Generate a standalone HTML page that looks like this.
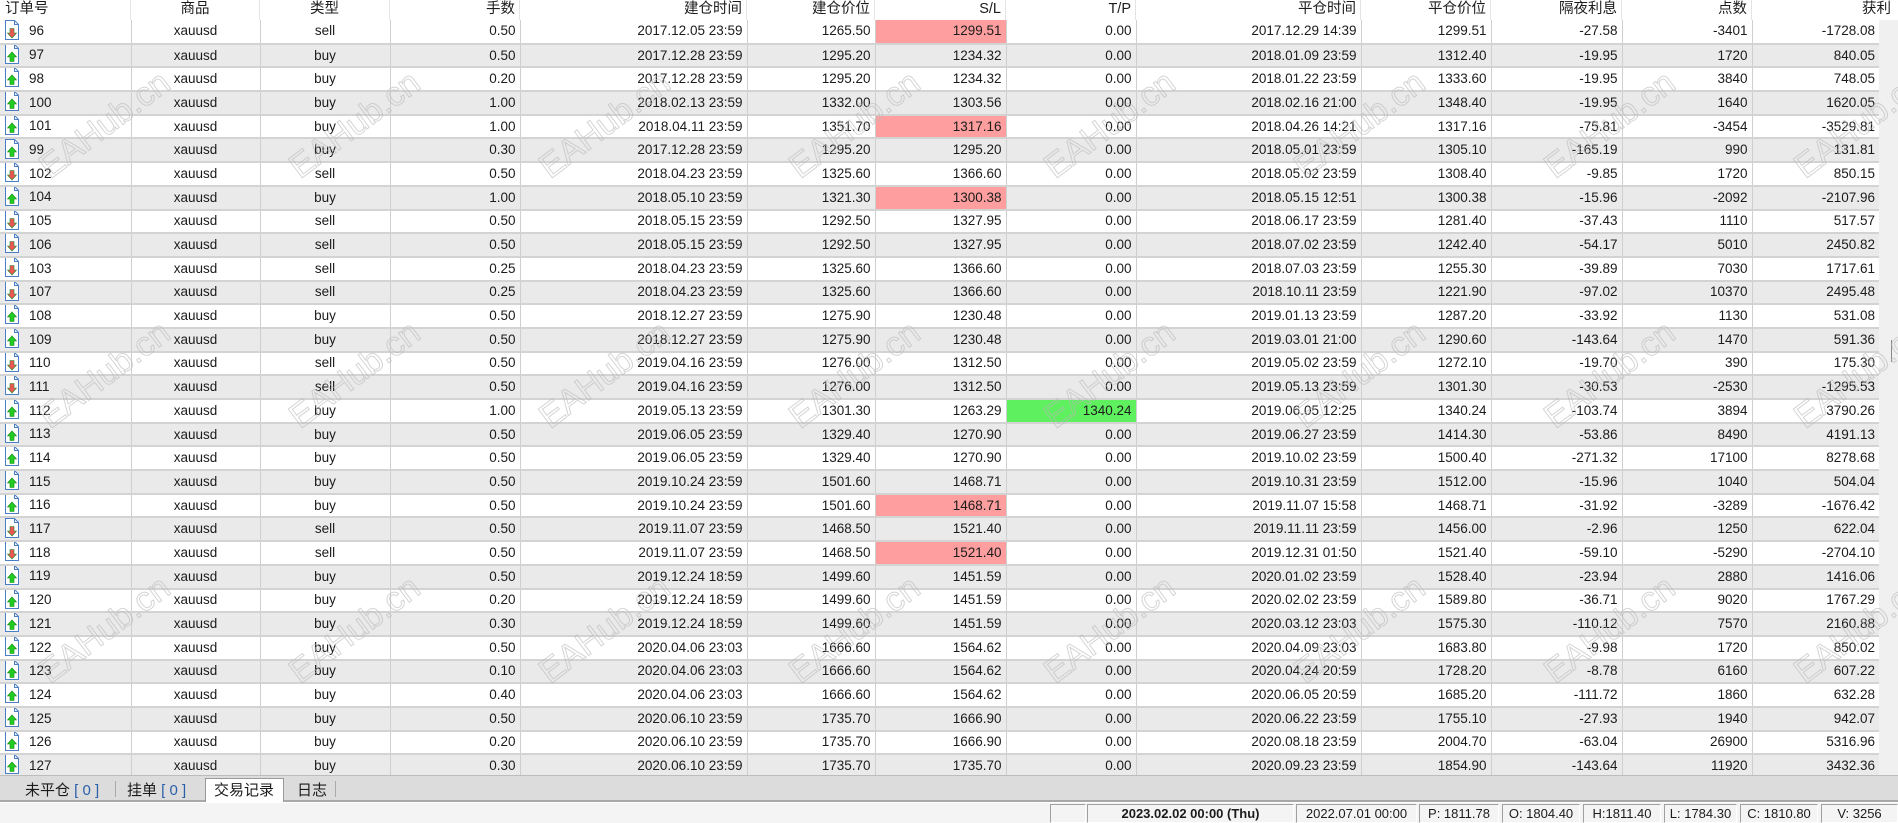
<!DOCTYPE html>
<html><head><meta charset="utf-8">
<style>
*{margin:0;padding:0;box-sizing:border-box}
html,body{width:1898px;height:823px;overflow:hidden;background:#fff;font-family:"Liberation Sans","Noto Sans CJK SC",sans-serif;color:#1b1b1b}
#hdr{position:absolute;left:0;top:0;width:1898px;height:20px;background:#fff;font-size:14.5px}
#hdr div{position:absolute;top:0;height:20px;line-height:19px;border-right:1px solid #e4e4e4}
table{position:absolute;left:0;top:20px;border-collapse:collapse;table-layout:fixed;width:1879px;font-size:13.5px}
td{height:23.7px;padding:0 4px;text-align:right;border-left:1px solid #cfcfcf;border-bottom:2px solid #d3d3d3;white-space:nowrap;overflow:hidden;line-height:20px}
td:first-child{border-left:none;text-align:left;padding-left:4px}
td.c{text-align:center}
tr:nth-child(even) td{background:#eaeaea}
td.r{background:#ff9e9e!important}
td.g{background:#5ff05f!important}
td svg{vertical-align:middle;margin-right:9px;position:relative;top:-2px}
#sb{position:absolute;left:1879px;top:20px;width:19px;height:755px;background:#f0f0f0}
#sb i{position:absolute;left:12px;top:320px;width:1px;height:22px;background:#888}
.wm{position:absolute;font-size:34px;font-family:"Liberation Sans",sans-serif;color:transparent;-webkit-text-stroke:1px rgba(185,185,185,.6);transform:translate(-50%,-50%) rotate(-37deg);white-space:nowrap;pointer-events:none}
#tabs{position:absolute;left:0;top:775px;width:1898px;height:27px;background:#dcdcdc;border-top:1px solid #bcbcbc;border-bottom:2px solid #a8a8a8;font-size:15px}
#tabs span{position:absolute;top:3px}
#tabs b.s{position:absolute;top:5px;width:1px;height:16px;background:#aaa}
#tabs .act{position:absolute;left:205px;top:2px;width:79px;height:24px;background:#fff;border:1px solid #999;border-bottom:none}
.bl{color:#2b5fa8}
#st{position:absolute;left:0;top:803px;width:1898px;height:20px;background:#f4f4f4;font-size:13px}
#st div{position:absolute;top:1px;height:19px;line-height:18px;border:1px solid;border-color:#a0a0a0 #fff #fff #a0a0a0;text-align:center}
</style></head><body>
<div id="hdr">
<div style="left:0;width:131px;padding-left:5px">订单号</div>
<div style="left:131px;width:129px;text-align:center">商品</div>
<div style="left:260px;width:130px;text-align:center">类型</div>
<div style="left:390px;width:130px;text-align:right;padding-right:4px">手数</div>
<div style="left:520px;width:227px;text-align:right;padding-right:4px">建仓时间</div>
<div style="left:747px;width:128px;text-align:right;padding-right:4px">建仓价位</div>
<div style="left:875px;width:131px;text-align:right;padding-right:4px">S/L</div>
<div style="left:1006px;width:130px;text-align:right;padding-right:4px">T/P</div>
<div style="left:1136px;width:225px;text-align:right;padding-right:4px">平仓时间</div>
<div style="left:1361px;width:130px;text-align:right;padding-right:4px">平仓价位</div>
<div style="left:1491px;width:131px;text-align:right;padding-right:4px">隔夜利息</div>
<div style="left:1622px;width:130px;text-align:right;padding-right:4px">点数</div>
<div style="left:1752px;width:146px;text-align:right;padding-right:7px;border:none">获利</div>
</div>
<svg width="0" height="0" style="position:absolute"><defs>
<g id="pg"><path d="M1.5 0.5H10.5L14.5 4.5V19.5H1.5Z" fill="#fff" stroke="#4a7fc8"/><path d="M10.5 0.5V4.5H14.5" fill="none" stroke="#4a7fc8"/></g>
<g id="up"><use href="#pg"/><path d="M8 8L12.5 13H10V17.5H6V13H3.5Z" fill="#22cc22" stroke="#118811" stroke-width=".6"/></g>
<g id="dn"><use href="#pg"/><path d="M8 18L12.5 13H10V8.5H6V13H3.5Z" fill="#ee5555" stroke="#228822" stroke-width=".6"/></g>
</defs></svg>
<table>
<colgroup><col style="width:131px"><col style="width:129px"><col style="width:130px"><col style="width:130px"><col style="width:227px"><col style="width:128px"><col style="width:131px"><col style="width:130px"><col style="width:225px"><col style="width:130px"><col style="width:131px"><col style="width:130px"><col style="width:127px"></colgroup>
<tr><td><svg width="16" height="20"><use href="#dn"/></svg>96</td><td class="c">xauusd</td><td class="c">sell</td><td>0.50</td><td>2017.12.05 23:59</td><td>1265.50</td><td class="r">1299.51</td><td>0.00</td><td>2017.12.29 14:39</td><td>1299.51</td><td>-27.58</td><td>-3401</td><td>-1728.08</td></tr>
<tr><td><svg width="16" height="20"><use href="#up"/></svg>97</td><td class="c">xauusd</td><td class="c">buy</td><td>0.50</td><td>2017.12.28 23:59</td><td>1295.20</td><td>1234.32</td><td>0.00</td><td>2018.01.09 23:59</td><td>1312.40</td><td>-19.95</td><td>1720</td><td>840.05</td></tr>
<tr><td><svg width="16" height="20"><use href="#up"/></svg>98</td><td class="c">xauusd</td><td class="c">buy</td><td>0.20</td><td>2017.12.28 23:59</td><td>1295.20</td><td>1234.32</td><td>0.00</td><td>2018.01.22 23:59</td><td>1333.60</td><td>-19.95</td><td>3840</td><td>748.05</td></tr>
<tr><td><svg width="16" height="20"><use href="#up"/></svg>100</td><td class="c">xauusd</td><td class="c">buy</td><td>1.00</td><td>2018.02.13 23:59</td><td>1332.00</td><td>1303.56</td><td>0.00</td><td>2018.02.16 21:00</td><td>1348.40</td><td>-19.95</td><td>1640</td><td>1620.05</td></tr>
<tr><td><svg width="16" height="20"><use href="#up"/></svg>101</td><td class="c">xauusd</td><td class="c">buy</td><td>1.00</td><td>2018.04.11 23:59</td><td>1351.70</td><td class="r">1317.16</td><td>0.00</td><td>2018.04.26 14:21</td><td>1317.16</td><td>-75.81</td><td>-3454</td><td>-3529.81</td></tr>
<tr><td><svg width="16" height="20"><use href="#up"/></svg>99</td><td class="c">xauusd</td><td class="c">buy</td><td>0.30</td><td>2017.12.28 23:59</td><td>1295.20</td><td>1295.20</td><td>0.00</td><td>2018.05.01 23:59</td><td>1305.10</td><td>-165.19</td><td>990</td><td>131.81</td></tr>
<tr><td><svg width="16" height="20"><use href="#dn"/></svg>102</td><td class="c">xauusd</td><td class="c">sell</td><td>0.50</td><td>2018.04.23 23:59</td><td>1325.60</td><td>1366.60</td><td>0.00</td><td>2018.05.02 23:59</td><td>1308.40</td><td>-9.85</td><td>1720</td><td>850.15</td></tr>
<tr><td><svg width="16" height="20"><use href="#up"/></svg>104</td><td class="c">xauusd</td><td class="c">buy</td><td>1.00</td><td>2018.05.10 23:59</td><td>1321.30</td><td class="r">1300.38</td><td>0.00</td><td>2018.05.15 12:51</td><td>1300.38</td><td>-15.96</td><td>-2092</td><td>-2107.96</td></tr>
<tr><td><svg width="16" height="20"><use href="#dn"/></svg>105</td><td class="c">xauusd</td><td class="c">sell</td><td>0.50</td><td>2018.05.15 23:59</td><td>1292.50</td><td>1327.95</td><td>0.00</td><td>2018.06.17 23:59</td><td>1281.40</td><td>-37.43</td><td>1110</td><td>517.57</td></tr>
<tr><td><svg width="16" height="20"><use href="#dn"/></svg>106</td><td class="c">xauusd</td><td class="c">sell</td><td>0.50</td><td>2018.05.15 23:59</td><td>1292.50</td><td>1327.95</td><td>0.00</td><td>2018.07.02 23:59</td><td>1242.40</td><td>-54.17</td><td>5010</td><td>2450.82</td></tr>
<tr><td><svg width="16" height="20"><use href="#dn"/></svg>103</td><td class="c">xauusd</td><td class="c">sell</td><td>0.25</td><td>2018.04.23 23:59</td><td>1325.60</td><td>1366.60</td><td>0.00</td><td>2018.07.03 23:59</td><td>1255.30</td><td>-39.89</td><td>7030</td><td>1717.61</td></tr>
<tr><td><svg width="16" height="20"><use href="#dn"/></svg>107</td><td class="c">xauusd</td><td class="c">sell</td><td>0.25</td><td>2018.04.23 23:59</td><td>1325.60</td><td>1366.60</td><td>0.00</td><td>2018.10.11 23:59</td><td>1221.90</td><td>-97.02</td><td>10370</td><td>2495.48</td></tr>
<tr><td><svg width="16" height="20"><use href="#up"/></svg>108</td><td class="c">xauusd</td><td class="c">buy</td><td>0.50</td><td>2018.12.27 23:59</td><td>1275.90</td><td>1230.48</td><td>0.00</td><td>2019.01.13 23:59</td><td>1287.20</td><td>-33.92</td><td>1130</td><td>531.08</td></tr>
<tr><td><svg width="16" height="20"><use href="#up"/></svg>109</td><td class="c">xauusd</td><td class="c">buy</td><td>0.50</td><td>2018.12.27 23:59</td><td>1275.90</td><td>1230.48</td><td>0.00</td><td>2019.03.01 21:00</td><td>1290.60</td><td>-143.64</td><td>1470</td><td>591.36</td></tr>
<tr><td><svg width="16" height="20"><use href="#dn"/></svg>110</td><td class="c">xauusd</td><td class="c">sell</td><td>0.50</td><td>2019.04.16 23:59</td><td>1276.00</td><td>1312.50</td><td>0.00</td><td>2019.05.02 23:59</td><td>1272.10</td><td>-19.70</td><td>390</td><td>175.30</td></tr>
<tr><td><svg width="16" height="20"><use href="#dn"/></svg>111</td><td class="c">xauusd</td><td class="c">sell</td><td>0.50</td><td>2019.04.16 23:59</td><td>1276.00</td><td>1312.50</td><td>0.00</td><td>2019.05.13 23:59</td><td>1301.30</td><td>-30.53</td><td>-2530</td><td>-1295.53</td></tr>
<tr><td><svg width="16" height="20"><use href="#up"/></svg>112</td><td class="c">xauusd</td><td class="c">buy</td><td>1.00</td><td>2019.05.13 23:59</td><td>1301.30</td><td>1263.29</td><td class="g">1340.24</td><td>2019.06.05 12:25</td><td>1340.24</td><td>-103.74</td><td>3894</td><td>3790.26</td></tr>
<tr><td><svg width="16" height="20"><use href="#up"/></svg>113</td><td class="c">xauusd</td><td class="c">buy</td><td>0.50</td><td>2019.06.05 23:59</td><td>1329.40</td><td>1270.90</td><td>0.00</td><td>2019.06.27 23:59</td><td>1414.30</td><td>-53.86</td><td>8490</td><td>4191.13</td></tr>
<tr><td><svg width="16" height="20"><use href="#up"/></svg>114</td><td class="c">xauusd</td><td class="c">buy</td><td>0.50</td><td>2019.06.05 23:59</td><td>1329.40</td><td>1270.90</td><td>0.00</td><td>2019.10.02 23:59</td><td>1500.40</td><td>-271.32</td><td>17100</td><td>8278.68</td></tr>
<tr><td><svg width="16" height="20"><use href="#up"/></svg>115</td><td class="c">xauusd</td><td class="c">buy</td><td>0.50</td><td>2019.10.24 23:59</td><td>1501.60</td><td>1468.71</td><td>0.00</td><td>2019.10.31 23:59</td><td>1512.00</td><td>-15.96</td><td>1040</td><td>504.04</td></tr>
<tr><td><svg width="16" height="20"><use href="#up"/></svg>116</td><td class="c">xauusd</td><td class="c">buy</td><td>0.50</td><td>2019.10.24 23:59</td><td>1501.60</td><td class="r">1468.71</td><td>0.00</td><td>2019.11.07 15:58</td><td>1468.71</td><td>-31.92</td><td>-3289</td><td>-1676.42</td></tr>
<tr><td><svg width="16" height="20"><use href="#dn"/></svg>117</td><td class="c">xauusd</td><td class="c">sell</td><td>0.50</td><td>2019.11.07 23:59</td><td>1468.50</td><td>1521.40</td><td>0.00</td><td>2019.11.11 23:59</td><td>1456.00</td><td>-2.96</td><td>1250</td><td>622.04</td></tr>
<tr><td><svg width="16" height="20"><use href="#dn"/></svg>118</td><td class="c">xauusd</td><td class="c">sell</td><td>0.50</td><td>2019.11.07 23:59</td><td>1468.50</td><td class="r">1521.40</td><td>0.00</td><td>2019.12.31 01:50</td><td>1521.40</td><td>-59.10</td><td>-5290</td><td>-2704.10</td></tr>
<tr><td><svg width="16" height="20"><use href="#up"/></svg>119</td><td class="c">xauusd</td><td class="c">buy</td><td>0.50</td><td>2019.12.24 18:59</td><td>1499.60</td><td>1451.59</td><td>0.00</td><td>2020.01.02 23:59</td><td>1528.40</td><td>-23.94</td><td>2880</td><td>1416.06</td></tr>
<tr><td><svg width="16" height="20"><use href="#up"/></svg>120</td><td class="c">xauusd</td><td class="c">buy</td><td>0.20</td><td>2019.12.24 18:59</td><td>1499.60</td><td>1451.59</td><td>0.00</td><td>2020.02.02 23:59</td><td>1589.80</td><td>-36.71</td><td>9020</td><td>1767.29</td></tr>
<tr><td><svg width="16" height="20"><use href="#up"/></svg>121</td><td class="c">xauusd</td><td class="c">buy</td><td>0.30</td><td>2019.12.24 18:59</td><td>1499.60</td><td>1451.59</td><td>0.00</td><td>2020.03.12 23:03</td><td>1575.30</td><td>-110.12</td><td>7570</td><td>2160.88</td></tr>
<tr><td><svg width="16" height="20"><use href="#up"/></svg>122</td><td class="c">xauusd</td><td class="c">buy</td><td>0.50</td><td>2020.04.06 23:03</td><td>1666.60</td><td>1564.62</td><td>0.00</td><td>2020.04.09 23:03</td><td>1683.80</td><td>-9.98</td><td>1720</td><td>850.02</td></tr>
<tr><td><svg width="16" height="20"><use href="#up"/></svg>123</td><td class="c">xauusd</td><td class="c">buy</td><td>0.10</td><td>2020.04.06 23:03</td><td>1666.60</td><td>1564.62</td><td>0.00</td><td>2020.04.24 20:59</td><td>1728.20</td><td>-8.78</td><td>6160</td><td>607.22</td></tr>
<tr><td><svg width="16" height="20"><use href="#up"/></svg>124</td><td class="c">xauusd</td><td class="c">buy</td><td>0.40</td><td>2020.04.06 23:03</td><td>1666.60</td><td>1564.62</td><td>0.00</td><td>2020.06.05 20:59</td><td>1685.20</td><td>-111.72</td><td>1860</td><td>632.28</td></tr>
<tr><td><svg width="16" height="20"><use href="#up"/></svg>125</td><td class="c">xauusd</td><td class="c">buy</td><td>0.50</td><td>2020.06.10 23:59</td><td>1735.70</td><td>1666.90</td><td>0.00</td><td>2020.06.22 23:59</td><td>1755.10</td><td>-27.93</td><td>1940</td><td>942.07</td></tr>
<tr><td><svg width="16" height="20"><use href="#up"/></svg>126</td><td class="c">xauusd</td><td class="c">buy</td><td>0.20</td><td>2020.06.10 23:59</td><td>1735.70</td><td>1666.90</td><td>0.00</td><td>2020.08.18 23:59</td><td>2004.70</td><td>-63.04</td><td>26900</td><td>5316.96</td></tr>
<tr><td><svg width="16" height="20"><use href="#up"/></svg>127</td><td class="c">xauusd</td><td class="c">buy</td><td>0.30</td><td>2020.06.10 23:59</td><td>1735.70</td><td>1735.70</td><td>0.00</td><td>2020.09.23 23:59</td><td>1854.90</td><td>-143.64</td><td>11920</td><td>3432.36</td></tr>
</table>
<div id="sb"><i></i></div>

<div class="wm" style="left:105px;top:125px">EAHub.cn</div>
<div class="wm" style="left:355px;top:125px">EAHub.cn</div>
<div class="wm" style="left:605px;top:125px">EAHub.cn</div>
<div class="wm" style="left:855px;top:125px">EAHub.cn</div>
<div class="wm" style="left:1110px;top:125px">EAHub.cn</div>
<div class="wm" style="left:1360px;top:125px">EAHub.cn</div>
<div class="wm" style="left:1610px;top:125px">EAHub.cn</div>
<div class="wm" style="left:1860px;top:125px">EAHub.cn</div>
<div class="wm" style="left:105px;top:375px">EAHub.cn</div>
<div class="wm" style="left:355px;top:375px">EAHub.cn</div>
<div class="wm" style="left:605px;top:375px">EAHub.cn</div>
<div class="wm" style="left:855px;top:375px">EAHub.cn</div>
<div class="wm" style="left:1110px;top:375px">EAHub.cn</div>
<div class="wm" style="left:1360px;top:375px">EAHub.cn</div>
<div class="wm" style="left:1610px;top:375px">EAHub.cn</div>
<div class="wm" style="left:1860px;top:375px">EAHub.cn</div>
<div class="wm" style="left:105px;top:630px">EAHub.cn</div>
<div class="wm" style="left:355px;top:630px">EAHub.cn</div>
<div class="wm" style="left:605px;top:630px">EAHub.cn</div>
<div class="wm" style="left:855px;top:630px">EAHub.cn</div>
<div class="wm" style="left:1110px;top:630px">EAHub.cn</div>
<div class="wm" style="left:1360px;top:630px">EAHub.cn</div>
<div class="wm" style="left:1610px;top:630px">EAHub.cn</div>
<div class="wm" style="left:1860px;top:630px">EAHub.cn</div>

<div id="tabs">
<div class="act"></div>
<span style="left:25px">未平仓 <span class="bl" style="position:static">[ 0 ]</span></span>
<b class="s" style="left:115px"></b>
<span style="left:127px">挂单 <span class="bl" style="position:static">[ 0 ]</span></span>
<span style="left:214px">交易记录</span>
<span style="left:297px">日志</span>
<b class="s" style="left:335px"></b>
</div>
<div id="st">
<div style="left:1050px;width:36px"></div>
<div style="left:1087px;width:207px;font-weight:bold">2023.02.02 00:00 (Thu)</div>
<div style="left:1296px;width:121px">2022.07.01 00:00</div>
<div style="left:1419px;width:80px">P: 1811.78</div>
<div style="left:1502px;width:78px">O: 1804.40</div>
<div style="left:1583px;width:78px">H:1811.40</div>
<div style="left:1664px;width:73px">L: 1784.30</div>
<div style="left:1740px;width:78px">C: 1810.80</div>
<div style="left:1821px;width:77px">V: 3256</div>
</div>
</body></html>
